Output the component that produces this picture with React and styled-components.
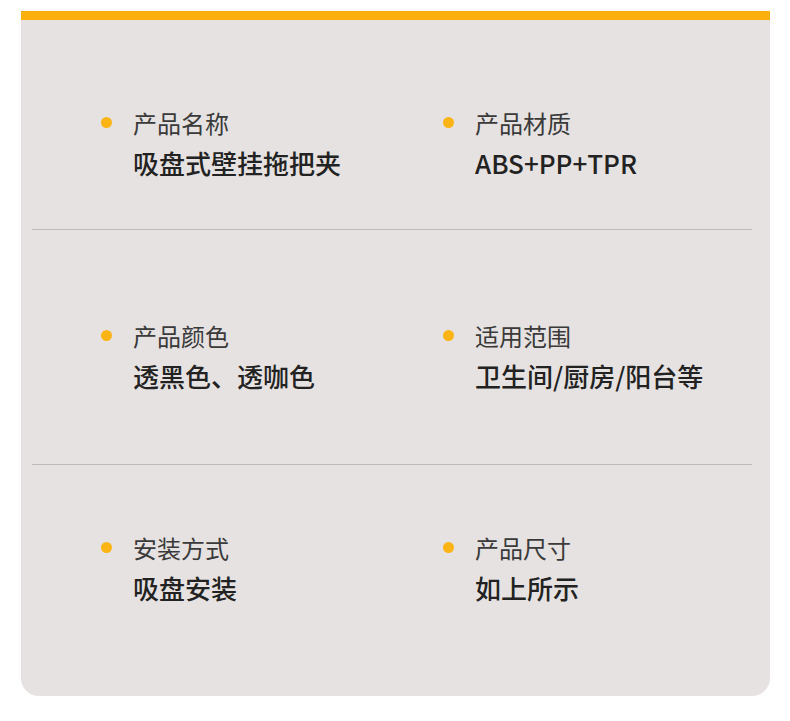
import styled, { createGlobalStyle } from "styled-components";

// 产品参数卡片
const specs = [
  {
    top: 87,
    height: 209,
    items: [
      { label: "产品名称", value: "吸盘式壁挂拖把夹" },
      { label: "产品材质", value: "ABS+PP+TPR" },
    ],
  },
  {
    top: 90,
    height: 234,
    items: [
      { label: "产品颜色", value: "透黑色、透咖色" },
      { label: "适用范围", value: "卫生间/厨房/阳台等" },
    ],
  },
  {
    top: 67,
    height: 231,
    items: [
      { label: "安装方式", value: "吸盘安装" },
      { label: "产品尺寸", value: "如上所示" },
    ],
  },
];

function App() {
  return (
    <>
      <GlobalStyle />
      <Card>
        {specs.map((row, i) => (
          <div key={i}>
            {i > 0 && <Divider />}
            <Row $top={row.top} $height={row.height}>
              {row.items.map((it) => (
                <Item key={it.label}>
                  <Dot />
                  <Label>{it.label}</Label>
                  <Value>{it.value}</Value>
                </Item>
              ))}
            </Row>
          </div>
        ))}
      </Card>
    </>
  );
}

export default App;

const GlobalStyle = createGlobalStyle`
  body {
    margin: 0;
    background: #fff;
    font-family: "Noto Sans CJK SC", "Noto Sans", sans-serif;
  }
`;

const Card = styled.div`
  width: 749px;
  margin: 11px 0 0 21px;
  background: #e6e2e1;
  border-top: 9px solid #fbaf0c;
  border-radius: 0 0 18px 18px;
`;

const Divider = styled.div`
  height: 1px;
  margin: 0 18px 0 11px;
  background: #bdb9b9;
`;

const Row = styled.div`
  box-sizing: border-box;
  height: ${(p) => p.$height}px;
  padding: ${(p) => p.$top}px 0 0 80px;
  display: grid;
  grid-template-columns: 342px 342px;
  align-items: start;
`;

const Item = styled.div`
  display: grid;
  grid-template-columns: 11px 1fr;
  column-gap: 21px;
  align-items: center;
`;

const Dot = styled.span`
  display: block;
  width: 11px;
  height: 11px;
  margin-top: -1px;
  border-radius: 50%;
  background: #fbb415;
`;

const Label = styled.div`
  font-size: 24px;
  line-height: 32px;
  color: #3a3a3a;
  font-weight: 400;
`;

const Value = styled.div`
  grid-column: 2;
  margin-top: 5px;
  font-size: 26px;
  line-height: 38px;
  color: #222;
  font-weight: 500;
`;
